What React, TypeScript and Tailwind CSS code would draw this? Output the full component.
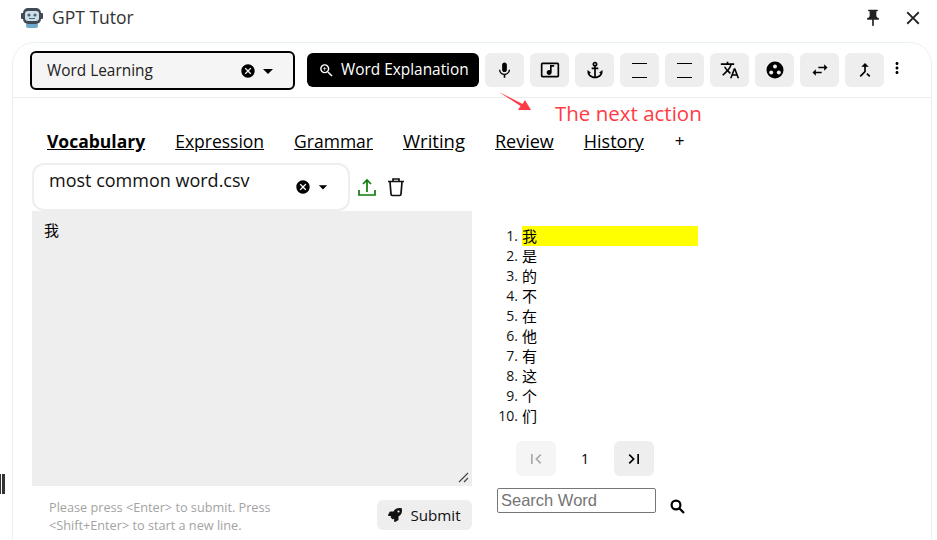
import React from 'react';
import { FaRocket } from 'react-icons/fa';
import {
  MdAnchor, MdArrowDropDown, MdCallMerge, MdCancel, MdClose, MdFirstPage, MdLastPage,
  MdMic, MdMoreVert, MdMusicVideo, MdPushPin, MdSwapHoriz, MdTranslate, MdZoomIn,
} from 'react-icons/md';

const font = { fontFamily: '"Open Sans", "Noto Sans CJK SC", sans-serif' };

function IconButton({ children }: { children: React.ReactNode }) {
  return <button className="w-[39px] h-[34px] rounded-md bg-[#eeeeee] flex items-center justify-center text-black shrink-0">{children}</button>;
}

function TwoLines() {
  return (
    <div className="w-[15px] h-[15px] flex flex-col justify-between">
      <div className="h-px bg-black" />
      <div className="h-px bg-black" />
    </div>
  );
}

export default function App() {
  const words = ['我', '是', '的', '不', '在', '他', '有', '这', '个', '们'];

  return (
    <div className="w-[937px] h-[540px] overflow-hidden bg-white text-black relative" style={font}>
      {/* Title bar */}
      <div className="h-[42px] flex items-center pl-[21px] pr-[13px] pb-[7px]">
        <svg width="22" height="22" viewBox="0 0 22 22">
          <rect x="5" y="16" width="12" height="5" rx="2" fill="#6fa8c9" />
          <rect x="0" y="6" width="3" height="6" rx="1" fill="#3f4a55" />
          <rect x="19" y="6" width="3" height="6" rx="1" fill="#3f4a55" />
          <rect x="2" y="1" width="18" height="16" rx="5" fill="#3f4a55" />
          <rect x="4" y="4" width="14" height="10" rx="3" fill="#c9e0ea" />
          <circle cx="8" cy="8" r="1.6" fill="#55636e" />
          <circle cx="14" cy="8" r="1.6" fill="#55636e" />
          <path d="M8 11.5 H14" stroke="#55636e" strokeWidth="1" />
        </svg>
        <span className="ml-[9px] text-[17.5px] text-[#333]">GPT Tutor</span>
        <MdPushPin size={20} className="ml-auto text-[#222]" />
        <MdClose size={22} className="ml-[19px] text-[#222]" />
      </div>

      {/* Main card */}
      <div className="mx-[12px] w-[920px] h-[520px] border border-[#e8f2f4] rounded-t-[22px]">
        {/* Toolbar */}
        <div className="h-[55px] border-b border-[#e9eeee] flex items-start pt-[8px] pl-[17px]">
          <div className="w-[265px] h-[39px] rounded-md border-2 border-black bg-[#f5f5f5] flex items-center pl-[15px] pr-[15px]">
            <span className="text-[15.4px] text-[#222]">Word Learning</span>
            <MdCancel size={16} className="ml-auto mr-[-1px]" />
            <MdArrowDropDown size={24} className="ml-[1px] -mr-[2px]" />
          </div>
          <button className="ml-[12px] mt-[2px] w-[172px] h-[34px] rounded-md bg-black text-white flex items-center pl-[11px] text-[15.4px]">
            <MdZoomIn size={17} />
            <span className="ml-[6px]">Word Explanation</span>
          </button>
          <div className="ml-[6px] mt-[2px] flex gap-[6px]">
            <IconButton><MdMic size={19} /></IconButton>
            <IconButton><MdMusicVideo size={20} /></IconButton>
            <IconButton><MdAnchor size={20} /></IconButton>
            <IconButton><TwoLines /></IconButton>
            <IconButton><TwoLines /></IconButton>
            <IconButton><MdTranslate size={20} /></IconButton>
            <IconButton>
              <svg width="18" height="18" viewBox="0 0 18 18">
                <circle cx="9" cy="9" r="8.5" fill="#000" />
                <circle cx="9" cy="5.5" r="2" fill="#eee" />
                <circle cx="5.2" cy="11.5" r="2" fill="#eee" />
                <circle cx="12.8" cy="11.5" r="2" fill="#eee" />
              </svg>
            </IconButton>
            <IconButton><MdSwapHoriz size={20} /></IconButton>
            <IconButton><MdCallMerge size={20} /></IconButton>
          </div>
          <MdMoreVert size={18} className="ml-[4px] mt-[8px]" />
        </div>

        {/* Annotation */}
        <div className="relative">
          <svg className="absolute left-[485px] top-[-7px]" width="36" height="24" viewBox="0 0 36 24">
            <path d="M1 1 L22.5 15 L20 19 L33 19 L27 9 L24.5 13 Z" fill="#ff3b45" />
          </svg>
          <span className="absolute left-[542px] top-[1px] text-[20.5px] leading-[28px] text-[#ff3b45]">The next action</span>
        </div>

        {/* Tabs */}
        <div className="flex items-center gap-[30px] pl-[34px] pt-[29px] text-[17.5px] leading-[28px]">
          <span className="font-bold underline">Vocabulary</span>
          <span className="underline">Expression</span>
          <span className="underline">Grammar</span>
          <span className="underline text-[18.5px]">Writing</span>
          <span className="underline text-[18px]">Review</span>
          <span className="underline text-[18px]">History</span>
          <span className="text-[17px] text-black ml-[1px]">+</span>
        </div>

        <div className="flex pl-[19px]">
          {/* Left column */}
          <div className="w-[440px]">
            <div className="flex items-center h-[48px] mt-[8px]">
              <div className="w-[318px] h-[48px] rounded-xl border-2 border-[#eeeeee] flex items-center pl-[15px] pr-[15px] relative">
                <span className="text-[18px] -mt-[14px] text-[#111]">most common word.csv</span>
                <MdCancel size={16} className="ml-auto" />
                <MdArrowDropDown size={20} className="ml-[2px]" />
              </div>
              <svg className="ml-[7px] text-[#0a7d0a]" width="20" height="20" viewBox="0 0 20 20" fill="none" stroke="currentColor" strokeWidth="1.7">
                <path d="M10 15 V3 M6 7 L10 3 L14 7 M2 13 V18 H18 V13" />
              </svg>
              <svg className="ml-[9px]" width="20" height="20" viewBox="0 0 20 20" fill="none" stroke="#111" strokeWidth="1.7">
                <path d="M2 4.5 H18 M7 4 V2 H13 V4 M4 5 L5 17 Q5 18.5 6.5 18.5 H13.5 Q15 18.5 15 17 L16 5" />
              </svg>
            </div>
            <div className="w-[440px] h-[275px] bg-[#eeeeee] relative px-[12px] py-[8px] text-[15px] leading-[22px]">
              我
              <svg className="absolute right-[3px] bottom-[3px]" width="11" height="11" viewBox="0 0 11 11">
                <path d="M1 10 L10 1 M6 10 L10 6" stroke="#444" strokeWidth="1.2" />
              </svg>
            </div>
            <div className="flex items-start pl-[17px] pt-[12px]">
              <p className="w-[240px] text-[12.7px] leading-[18px] text-[#a3a3a3]">
                Please press &lt;Enter&gt; to submit. Press &lt;Shift+Enter&gt; to start a new line.
              </p>
              <button className="ml-auto w-[95px] h-[30px] mt-[2px] rounded-md bg-[#eeeeee] flex items-center justify-center gap-[8px] text-[15.2px] text-[#111]">
                <FaRocket size={14} />
                Submit
              </button>
            </div>
          </div>

          {/* Right column */}
          <div className="ml-[25px] w-[201px] pt-[71px]">
            <ol className="text-[14px] leading-[20px]">
              {words.map((w, i) => (
                <li key={w} className="flex">
                  <span className="w-[25px] text-right pr-[4px] shrink-0 text-[#111]">{i + 1}.</span>
                  <span className={i === 0 ? 'flex-1 bg-[#ffff00] text-[15px]' : 'flex-1 text-[15px]'}>{w}</span>
                </li>
              ))}
            </ol>
            <div className="flex items-center mt-[15px] pl-[19px]">
              <button className="w-[40px] h-[35px] rounded-md bg-[#f5f5f5] flex items-center justify-center text-[#a8a8a8]"><MdFirstPage size={20} /></button>
              <span className="w-[58px] text-center text-[14px]">1</span>
              <button className="w-[40px] h-[35px] rounded-md bg-[#eeeeee] flex items-center justify-center"><MdLastPage size={20} /></button>
            </div>
            <div className="flex items-start mt-[12px]">
              <input
                placeholder="Search Word"
                className="w-[159px] h-[25px] border border-[#767676] rounded-[2px] px-[3px] text-[16.5px] placeholder:text-[#757575] outline-none"
                style={{ fontFamily: '"Liberation Sans", Arial, sans-serif' }}
              />
              <svg className="ml-[14px] mt-[11px]" width="15" height="15" viewBox="0 0 15 15" fill="none" stroke="#000" strokeWidth="2.2">
                <circle cx="6" cy="6" r="4.4" />
                <path d="M9.2 9.2 L14 14" />
              </svg>
            </div>
          </div>
        </div>
      </div>

      {/* Stray bars at the left edge */}
      <div className="absolute left-0 top-[474px] w-[5px] h-[20px] flex gap-[1px]">
        <div className="w-[1px] bg-[#333]" />
        <div className="w-[3px] bg-[#333]" />
      </div>
    </div>
  );
}
